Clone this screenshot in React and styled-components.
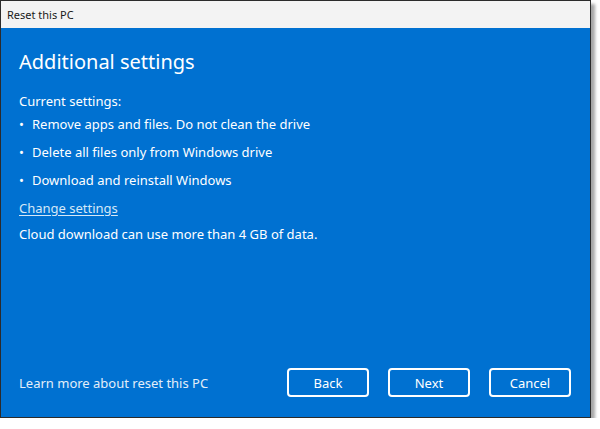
import React from 'react';
import styled, { createGlobalStyle } from 'styled-components';

const Global = createGlobalStyle`
  html, body {
    margin: 0;
    padding: 0;
    background: #ffffff;
    font-family: "Noto Sans", "Open Sans", sans-serif;
  }
`;

const Frame = styled.div`
  width: 589px;
  height: 416px;
  border: 1px solid #2b2b2b;
  box-shadow: 4px 4px 3px rgba(0, 0, 0, 0.35);
  display: flex;
  flex-direction: column;
  background: #0071d1;
`;

const TitleBar = styled.div`
  height: 27px;
  background: #f3f3f3;
  color: #1a1a1a;
  font-size: 11px;
  display: flex;
  align-items: center;
  padding-left: 6px;
  flex-shrink: 0;
`;

const Body = styled.div`
  flex: 1;
  display: flex;
  flex-direction: column;
  padding: 19px 19px 20px 18px;
  color: #ffffff;
`;

const Heading = styled.h1`
  margin: 0 0 14px 0;
  font-size: 20px;
  font-weight: 400;
  line-height: 30px;
`;

const Line = styled.div`
  font-size: 13px;
  line-height: 20px;
  margin-top: ${p => p.$top || 0}px;
`;

const Bullets = styled.ul`
  list-style: none;
  margin: 0;
  padding: 0;
`;

const Bullet = styled.li`
  font-size: 13px;
  line-height: 20px;
  margin-top: 8px;
  display: flex;
  &:first-child {
    margin-top: 3px;
  }
  &::before {
    content: '•';
    width: 13px;
    flex-shrink: 0;
  }
`;

const Link = styled.a`
  color: #d6e8f7;
  font-size: 13px;
  line-height: 20px;
  text-decoration: underline;
  text-underline-offset: 2px;
  margin-top: 8px;
  cursor: pointer;
`;

const Footer = styled.div`
  margin-top: auto;
  display: flex;
  align-items: center;
`;

const FooterLink = styled.span`
  font-size: 13px;
  color: #e3eef9;
  flex: 1;
`;

const Buttons = styled.div`
  display: flex;
  gap: 19px;
`;

const Button = styled.button`
  width: 82px;
  height: 29px;
  border: 2px solid #ffffff;
  border-radius: 4px;
  background: transparent;
  color: #ffffff;
  font-family: inherit;
  font-size: 13px;
  padding: 0;
`;

export default function App() {
  return (
    <>
      <Global />
      <Frame>
        <TitleBar>Reset this PC</TitleBar>
        <Body>
          <Heading>Additional settings</Heading>
          <Line>Current settings:</Line>
          <Bullets>
            <Bullet>Remove apps and files. Do not clean the drive</Bullet>
            <Bullet>Delete all files only from Windows drive</Bullet>
            <Bullet>Download and reinstall Windows</Bullet>
          </Bullets>
          <Link>Change settings</Link>
          <Line $top={6}>Cloud download can use more than 4 GB of data.</Line>
          <Footer>
            <FooterLink>Learn more about reset this PC</FooterLink>
            <Buttons>
              <Button>Back</Button>
              <Button>Next</Button>
              <Button>Cancel</Button>
            </Buttons>
          </Footer>
        </Body>
      </Frame>
    </>
  );
}
